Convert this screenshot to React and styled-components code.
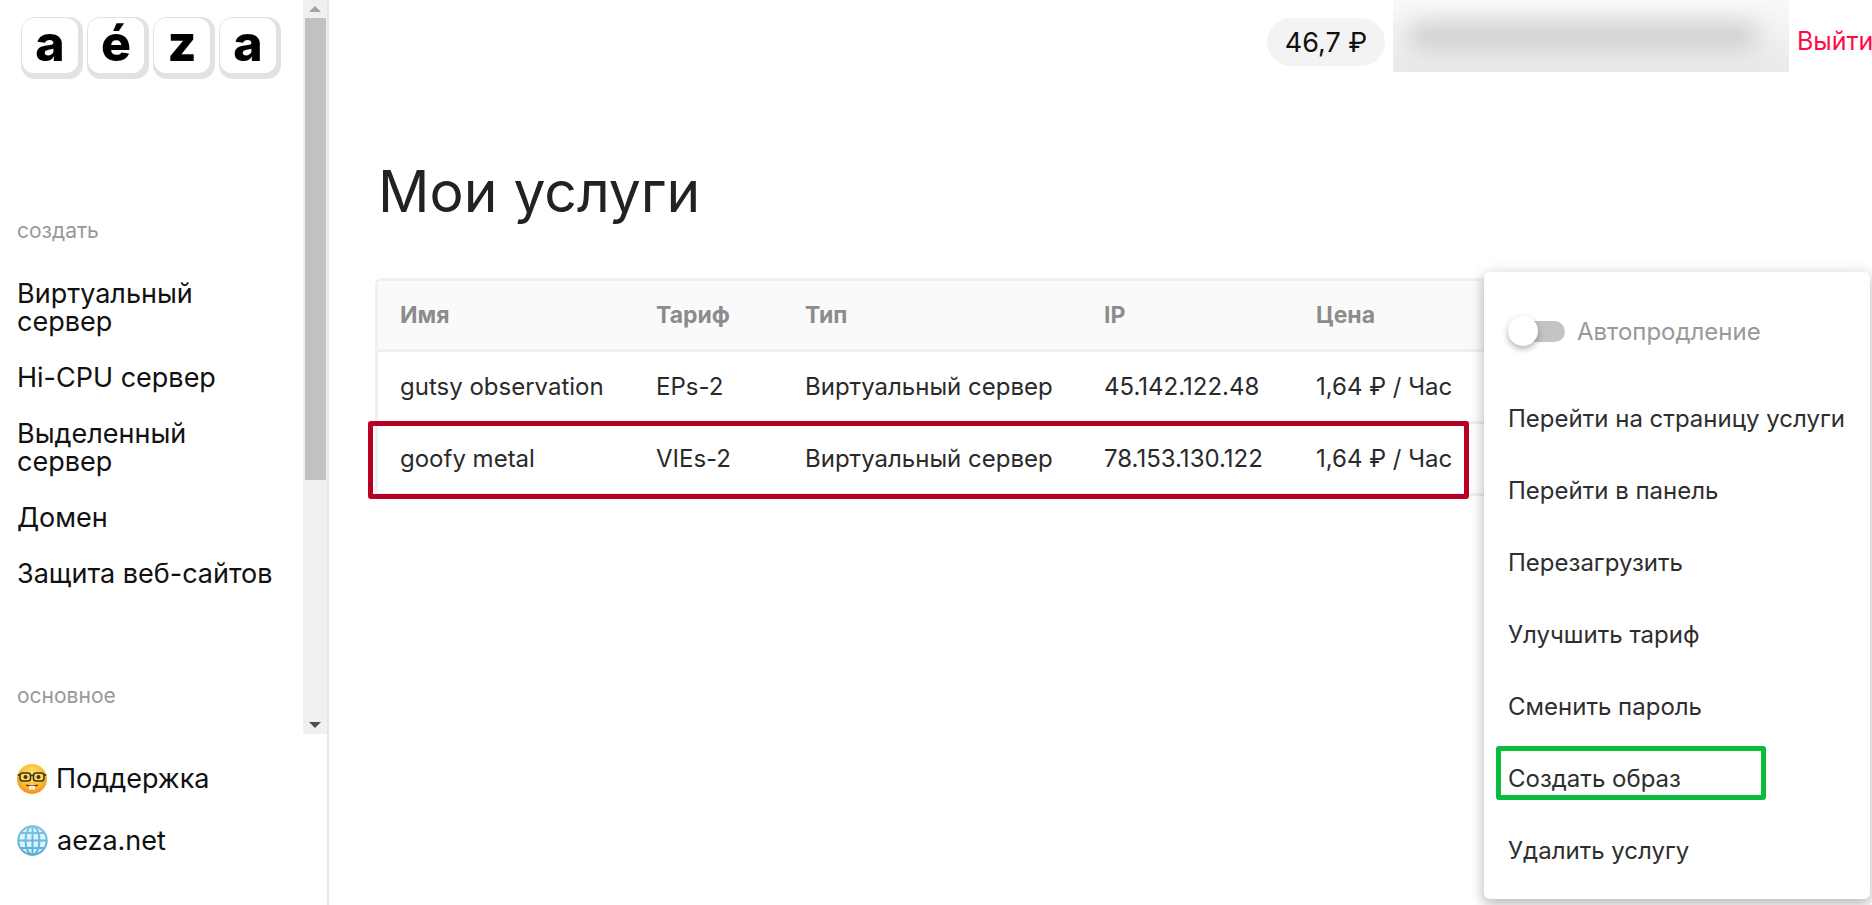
import React from "react";
import styled, { createGlobalStyle } from "styled-components";

const GlobalStyle = createGlobalStyle`
  html, body {
    margin: 0;
    padding: 0;
    height: 100%;
    overflow: hidden;
    background: #fff;
    font-family: Inter, "Noto Sans", "Liberation Sans", sans-serif;
  }
  * { box-sizing: border-box; }
`;

const Page = styled.div`
  display: flex;
  width: 1872px;
  height: 905px;
  overflow: hidden;
`;

const Sidebar = styled.aside`
  width: 329px;
  flex: none;
  height: 100%;
  border-right: 2px solid #e6e6e6;
`;

const ScrollArea = styled.div`
  display: flex;
  height: 734px;
`;

const SideContent = styled.div`
  flex: 1;
  padding: 17px 0 0 17px;
`;

const Logo = styled.div`
  display: flex;
  gap: 4px;
  margin-left: 4px;
  margin-bottom: 141px;
`;

const Key = styled.div`
  width: 62px;
  height: 62px;
  padding: 1px 5px 6px 1px;
  border-radius: 14px;
  background: #e2e2e2;
`;

const KeyFace = styled.div`
  display: flex;
  align-items: center;
  justify-content: center;
  width: 100%;
  height: 100%;
  border-radius: 12px;
  background: #fff;
  color: #000;
  font-size: 50px;
  font-weight: 800;
  line-height: 1;
  padding-bottom: 6px;
`;

const SectionLabel = styled.div`
  color: #999;
  font-size: 21px;
  line-height: 22px;
  margin-bottom: ${(p) => p.$gap}px;
`;

const NavList = styled.nav`
  display: flex;
  flex-direction: column;
  gap: 28px;
  margin-bottom: 97px;
`;

const NavItem = styled.div`
  color: #111;
  font-size: 27px;
  line-height: 28px;
  width: 265px;
`;

const ScrollTrack = styled.div`
  width: 24px;
  flex: none;
  display: flex;
  flex-direction: column;
  align-items: center;
  background: #f0f0f0;
`;

const Arrow = styled.div`
  height: 18px;
  flex: none;
  display: flex;
  align-items: center;
  justify-content: center;
  &::before {
    content: "";
    border-left: 6px solid transparent;
    border-right: 6px solid transparent;
    border-${(p) => (p.$up ? "bottom" : "top")}: 6px solid ${(p) => (p.$up ? "#a3a3a3" : "#505050")};
  }
`;

const Thumb = styled.div`
  width: 21px;
  height: 462px;
  background: #c1c1c1;
  margin-bottom: auto;
`;

const SideFooter = styled.div`
  display: flex;
  flex-direction: column;
  gap: 31px;
  padding: 30px 0 0 17px;
`;

const FooterLink = styled.div`
  display: flex;
  align-items: center;
  gap: 9px;
  color: #111;
  font-size: 27px;
  line-height: 28px;
`;

const Main = styled.main`
  flex: 1;
  position: relative;
  min-width: 0;
`;

const TopBar = styled.header`
  display: flex;
  align-items: flex-start;
  justify-content: flex-end;
  height: 72px;
`;

const Balance = styled.div`
  display: flex;
  align-items: center;
  justify-content: center;
  width: 118px;
  height: 48px;
  margin-top: 18px;
  border-radius: 24px;
  background: #f3f3f3;
  color: #111;
  font-size: 27px;
`;

const BlurBox = styled.div`
  width: 396px;
  height: 72px;
  margin-left: 8px;
  overflow: hidden;
  background: linear-gradient(#f9f9f9, #e9e9e9);
  display: flex;
  align-items: center;
  justify-content: flex-start;
  padding-left: 18px;
`;

const BlurBar = styled.div`
  width: 345px;
  height: 22px;
  background: #c6c6c6;
  filter: blur(12px);
`;

const Logout = styled.a`
  flex: none;
  width: 75px;
  margin: 26px 0 0 8px;
  color: #ff0a45;
  font-size: 25px;
  line-height: 30px;
  white-space: nowrap;
`;

const Title = styled.h1`
  margin: 82px 0 48px 49px;
  height: 76px;
  color: #222;
  font-size: 57px;
  font-weight: 400;
  line-height: 76px;
`;

const Table = styled.div`
  margin: 0 20px 0 46px;
  border: 3px solid #f0f0f0;
  border-bottom: none;
  border-radius: 6px 6px 0 0;
`;

const Row = styled.div`
  position: relative;
  display: grid;
  grid-template-columns: 256px 149px 299px 212px 1fr;
  align-items: center;
  height: ${(p) => (p.$head ? 71 : 72)}px;
  padding-left: 22px;
  border-bottom: 3px solid #f0f0f0;
  background: ${(p) => (p.$head ? "#fafafa" : "#fff")};
  color: ${(p) => (p.$head ? "#8c8c8c" : "#2a2a2a")};
  font-size: ${(p) => (p.$head ? 23 : 24)}px;
  font-weight: ${(p) => (p.$head ? 700 : 400)};
`;

const Cell = styled.div`
  white-space: nowrap;
`;

const RedFrame = styled.div`
  position: absolute;
  left: -10px;
  top: -3px;
  width: 1101px;
  height: 78px;
  border: 5px solid #b80024;
  border-radius: 3px;
`;

const Menu = styled.div`
  position: absolute;
  left: 1155px;
  top: 272px;
  width: 386px;
  height: 627px;
  padding-top: 23px;
  border-radius: 6px;
  background: #fff;
  box-shadow: 0 3px 14px 2px rgba(0, 0, 0, 0.16), 0 6px 12px rgba(0, 0, 0, 0.12);
`;

const ToggleRow = styled.div`
  display: flex;
  align-items: center;
  gap: 12px;
  height: 72px;
  margin-bottom: 15px;
  padding-left: 24px;
  color: #999;
  font-size: 24px;
`;

const Toggle = styled.div`
  position: relative;
  width: 57px;
  height: 21px;
  border-radius: 11px;
  background: #c4c4c4;
  &::after {
    content: "";
    position: absolute;
    left: 0;
    top: -5px;
    width: 30px;
    height: 30px;
    border-radius: 50%;
    background: #fff;
    box-shadow: 0 3px 6px rgba(0, 0, 0, 0.3);
  }
`;

const MenuItem = styled.div`
  position: relative;
  display: flex;
  align-items: center;
  height: 72px;
  padding-left: 24px;
  color: #2e2e2e;
  font-size: 24px;
`;

const GreenFrame = styled.div`
  position: absolute;
  left: 12px;
  top: 4px;
  width: 270px;
  height: 54px;
  border: 5px solid #0abb3e;
  border-radius: 3px;
`;

const NerdIcon = () => (
  <svg width="30" height="30" viewBox="0 0 30 30">
    <defs>
      <radialGradient id="nerdFace" cx="50%" cy="35%" r="65%">
        <stop offset="0%" stopColor="#fee36c" />
        <stop offset="65%" stopColor="#fcbc33" />
        <stop offset="100%" stopColor="#f08a1c" />
      </radialGradient>
    </defs>
    <circle cx="15" cy="15" r="15" fill="url(#nerdFace)" />
    <rect x="3" y="9" width="10.5" height="8" rx="2.5" fill="#f9d75e" stroke="#3d3322" strokeWidth="1.5" />
    <rect x="16.5" y="9" width="10.5" height="8" rx="2.5" fill="#f9d75e" stroke="#3d3322" strokeWidth="1.5" />
    <path d="M0.6 11h2.4M13.5 11.5h3M27 11h2.4" stroke="#3d3322" strokeWidth="1.5" />
    <circle cx="8.5" cy="13" r="2" fill="#4a3014" />
    <circle cx="21.5" cy="13" r="2" fill="#4a3014" />
    <path d="M9 21c4 1.6 8 1.6 12 0" stroke="#7a4a16" strokeWidth="1.4" fill="none" />
    <rect x="12" y="22" width="6" height="3.4" rx="0.8" fill="#fff" />
    <path d="M15 22v3.4" stroke="#b9b0a0" strokeWidth="0.7" />
  </svg>
);

const GlobeIcon = () => (
  <svg width="31" height="31" viewBox="0 0 31 31" fill="none">
    <defs>
      <linearGradient id="globeLine" x1="0" y1="0" x2="0" y2="1">
        <stop offset="0%" stopColor="#7cc4e6" />
        <stop offset="100%" stopColor="#58aed6" />
      </linearGradient>
    </defs>
    <circle cx="15.5" cy="15.5" r="15" fill="#dff2fa" />
    <g stroke="url(#globeLine)" strokeWidth="2">
      <circle cx="15.5" cy="15.5" r="14.2" />
      <ellipse cx="15.5" cy="15.5" rx="7" ry="14.2" />
      <path d="M15.5 1v29M1 15.5h29M3.4 8h24.2M3.4 23h24.2" />
    </g>
  </svg>
);

const createItems = [
  "Виртуальный сервер",
  "Hi-CPU сервер",
  "Выделенный сервер",
  "Домен",
  "Защита веб-сайтов",
];

const columns = ["Имя", "Тариф", "Тип", "IP", "Цена"];

const services = [
  ["gutsy observation", "EPs-2", "Виртуальный сервер", "45.142.122.48", "1,64 ₽ / Час"],
  ["goofy metal", "VIEs-2", "Виртуальный сервер", "78.153.130.122", "1,64 ₽ / Час"],
];

const menuItems = [
  "Перейти на страницу услуги",
  "Перейти в панель",
  "Перезагрузить",
  "Улучшить тариф",
  "Сменить пароль",
  "Создать образ",
  "Удалить услугу",
];

export default function App() {
  return (
    <Page>
      <GlobalStyle />
      <Sidebar>
        <ScrollArea>
          <SideContent>
            <Logo>
              {["a", "é", "z", "a"].map((letter, i) => (
                <Key key={i}>
                  <KeyFace>{letter}</KeyFace>
                </Key>
              ))}
            </Logo>
            <SectionLabel $gap={38}>создать</SectionLabel>
            <NavList>
              {createItems.map((item) => (
                <NavItem key={item}>{item}</NavItem>
              ))}
            </NavList>
            <SectionLabel $gap={0}>основное</SectionLabel>
          </SideContent>
          <ScrollTrack>
            <Arrow $up />
            <Thumb />
            <Arrow />
          </ScrollTrack>
        </ScrollArea>
        <SideFooter>
          <FooterLink>
            <NerdIcon />
            Поддержка
          </FooterLink>
          <FooterLink>
            <GlobeIcon />
            aeza.net
          </FooterLink>
        </SideFooter>
      </Sidebar>
      <Main>
        <TopBar>
          <Balance>46,7 ₽</Balance>
          <BlurBox>
            <BlurBar />
          </BlurBox>
          <Logout>Выйти</Logout>
        </TopBar>
        <Title>Мои услуги</Title>
        <Table>
          <Row $head>
            {columns.map((col) => (
              <Cell key={col}>{col}</Cell>
            ))}
          </Row>
          {services.map((service, i) => (
            <Row key={service[0]}>
              {service.map((value) => (
                <Cell key={value}>{value}</Cell>
              ))}
              {i === 1 && <RedFrame />}
            </Row>
          ))}
        </Table>
        <Menu>
          <ToggleRow>
            <Toggle />
            Автопродление
          </ToggleRow>
          {menuItems.map((item) => (
            <MenuItem key={item}>
              {item}
              {item === "Создать образ" && <GreenFrame />}
            </MenuItem>
          ))}
        </Menu>
      </Main>
    </Page>
  );
}
